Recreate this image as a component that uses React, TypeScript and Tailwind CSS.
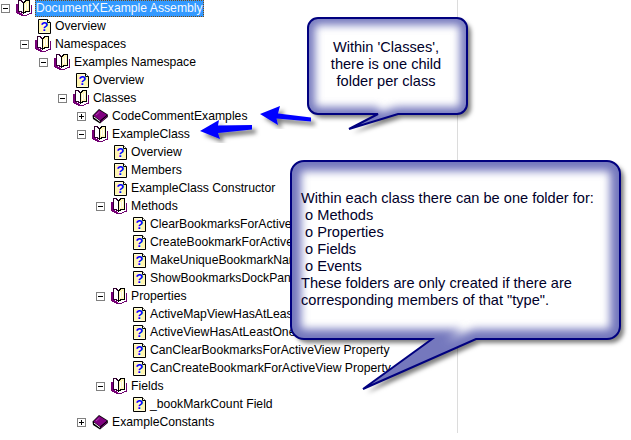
type TreeNode = {
  label: string;
  kind: 'folder' | 'closed' | 'page';
  selected?: boolean;
  children?: TreeNode[];
};

const page = (label: string): TreeNode => ({ label, kind: 'page' });

const tree: TreeNode = {
  label: 'DocumentXExample Assembly',
  kind: 'folder',
  selected: true,
  children: [
    page('Overview'),
    {
      label: 'Namespaces',
      kind: 'folder',
      children: [
        {
          label: 'Examples Namespace',
          kind: 'folder',
          children: [
            page('Overview'),
            {
              label: 'Classes',
              kind: 'folder',
              children: [
                { label: 'CodeCommentExamples', kind: 'closed' },
                {
                  label: 'ExampleClass',
                  kind: 'folder',
                  children: [
                    page('Overview'),
                    page('Members'),
                    page('ExampleClass Constructor'),
                    {
                      label: 'Methods',
                      kind: 'folder',
                      children: [
                        page('ClearBookmarksForActiveView Method'),
                        page('CreateBookmarkForActiveView Method'),
                        page('MakeUniqueBookmarkName Method'),
                        page('ShowBookmarksDockPanel Method'),
                      ],
                    },
                    {
                      label: 'Properties',
                      kind: 'folder',
                      children: [
                        page('ActiveMapViewHasAtLeastOne Property'),
                        page('ActiveViewHasAtLeastOne Property'),
                        page('CanClearBookmarksForActiveView Property'),
                        page('CanCreateBookmarkForActiveView Property'),
                      ],
                    },
                    {
                      label: 'Fields',
                      kind: 'folder',
                      children: [page('_bookMarkCount Field')],
                    },
                  ],
                },
                { label: 'ExampleConstants', kind: 'closed' },
              ],
            },
          ],
        },
      ],
    },
  ],
};

function Expander({ open }: { open: boolean }) {
  return (
    <svg width="9" height="9" viewBox="0 0 9 9" className="shrink-0" shapeRendering="crispEdges">
      <rect x="0.5" y="0.5" width="8" height="8" fill="#fff" stroke="#808080" />
      <path d="M2 4.5H7" stroke="#000" />
      {!open && <path d="M4.5 2V7" stroke="#000" />}
    </svg>
  );
}

function OpenBook() {
  return (
    <svg width="16" height="16" viewBox="0 0 16 16" className="shrink-0" shapeRendering="crispEdges">
      <path d="M0.5 3.5V12.5L6.5 15.5H9.5L15.5 13V4.5" fill="#fff" stroke="#700070" />
      <path d="M1.5 4V12L7 14.5" fill="none" stroke="#800080" />
      <path d="M2.5 0.5H5L7.5 3V13.5L5 11.5H2.5Z" fill="#fff" stroke="#300030" />
      <path d="M7.5 3L10 0.5H13.5V11.5H10L7.5 13.5Z" fill="#fff6b8" stroke="#000" />
      <path d="M9.5 4V10M11.5 3V9" stroke="#ffffff" />
    </svg>
  );
}

function ClosedBook() {
  return (
    <svg width="16" height="16" viewBox="0 0 16 16" className="shrink-0">
      <path d="M0.5 7.5L7 1L15.8 6.5V9L8 15.5L1 11Z" fill="#000" />
      <path d="M1.5 7.5L7 2L15 6.8L8 12.5Z" fill="#800080" />
      <path d="M2 9L8 13.5" fill="none" stroke="#fff" />
      <path d="M8.5 14L15 8.5" fill="none" stroke="#800080" />
      <path d="M4 7L7.5 4" stroke="#b040b0" />
    </svg>
  );
}

function HelpPage() {
  return (
    <svg width="13" height="15" viewBox="0 0 13 15" className="shrink-0">
      <path d="M0.5 0.5H9.5L12.5 3.5V14.5H0.5Z" fill="#fffcd8" stroke="#000" />
      <path d="M2 2V13M4 2V13M9 4V13M11 4V13" stroke="#fff08a" />
      <path d="M9.5 0.5V3.5H12.5" fill="#fff" stroke="#000" />
      <text x="6.5" y="12" textAnchor="middle" fontFamily="Liberation Sans" fontWeight="700" fontSize="13" fill="#0000ff">
        ?
      </text>
    </svg>
  );
}

function TreeItem({ node }: { node: TreeNode }) {
  const isPage = node.kind === 'page';
  return (
    <li>
      <div className={isPage ? 'flex items-center h-[18px] pl-[18px] gap-[3px]' : 'flex items-center h-[18px]'}>
        {!isPage && <Expander open={node.kind === 'folder'} />}
        {!isPage && <span className="w-[6px] shrink-0" />}
        {node.kind === 'folder' && <OpenBook />}
        {node.kind === 'closed' && <ClosedBook />}
        {isPage && <HelpPage />}
        <span
          className={
            node.selected
              ? 'ml-[3px] px-[1px] h-[17px] leading-[16px] mt-[1px] bg-[#3399ff] text-[#f4f8ff] outline-1 outline-dotted outline-[#7a4a10] -outline-offset-1 whitespace-nowrap'
              : isPage
                ? 'px-[1px] leading-[16px] -mt-[1px] whitespace-nowrap'
                : 'ml-[3px] px-[1px] leading-[16px] -mt-[1px] whitespace-nowrap'
          }
        >
          {node.label}
        </span>
      </div>
      {node.children && (
        <ul className="pl-[19px]">
          {node.children.map((child, i) => (
            <TreeItem key={i} node={child} />
          ))}
        </ul>
      )}
    </li>
  );
}

const bigBubble =
  'M304 161H607A13 13 0 0 1 620 174V326A13 13 0 0 1 607 339H476L363 389L432 339H304A13 13 0 0 1 291 326V174A13 13 0 0 1 304 161Z';
const smallBubble =
  'M318 18H457A10 10 0 0 1 467 28V104A10 10 0 0 1 457 114H398L349 129L378 114H318A10 10 0 0 1 308 104V28A10 10 0 0 1 318 18Z';

function Bubble({ d, id, glow }: { d: string; id: string; glow: number }) {
  return (
    <>
      <path d={d} fill="#00007f" filter="url(#shadow)" />
      <clipPath id={id}>
        <path d={d} />
      </clipPath>
      <g clipPath={`url(#${id})`}>
        <path d={d} fill="#fff" />
        <path d={d} fill="none" stroke="#7478bd" strokeWidth={glow} filter="url(#glow)" />
      </g>
      <path d={d} fill="none" stroke="#00007f" strokeWidth="2" />
    </>
  );
}

function Overlay() {
  return (
    <svg width="631" height="440" viewBox="0 0 631 440" className="absolute left-0 top-0">
      <defs>
        <filter id="shadow" x="-20%" y="-20%" width="140%" height="140%">
          <feDropShadow dx="4" dy="4" stdDeviation="2" floodColor="#000" floodOpacity="0.5" />
        </filter>
        <filter id="glow" x="-20%" y="-20%" width="140%" height="140%">
          <feGaussianBlur stdDeviation="4" />
        </filter>
      </defs>
      <path
        d="M260 114L280 106L278 113.5L311 117.5L311 121.5L276.5 118.5L278 125Z"
        fill="#0000ff"
        filter="url(#shadow)"
      />
      <path
        d="M200 131L219 120L218 125.5L252 125L252 129.5L218 133L220 139Z"
        fill="#0000ff"
        filter="url(#shadow)"
      />
      <Bubble d={smallBubble} id="clip-small" glow={14} />
      <Bubble d={bigBubble} id="clip-big" glow={20} />
    </svg>
  );
}

export default function App() {
  return (
    <div className="relative w-[631px] h-[440px] overflow-hidden bg-white text-black font-['Liberation_Sans',Arial,sans-serif]">
      <div className="w-[458px] h-[433px] overflow-hidden border-r border-[#dcdcdc] pl-[1px] text-[12.2px]">
        <ul className="-mt-[1px]">
          <TreeItem node={tree} />
        </ul>
      </div>
      <Overlay />
      <div className="absolute left-[307px] top-[39px] w-[158px] text-center text-[14.6px] leading-[17px] text-[#00002a]">
        Within 'Classes',
        <br />
        there is one child
        <br />
        folder per class
      </div>
      <div className="absolute left-[301px] top-[190px] text-[14.6px] leading-[17px] whitespace-pre text-[#00002a]">
        {`Within each class there can be one folder for:
 o Methods
 o Properties
 o Fields
 o Events
These folders are only created if there are
corresponding members of that "type".`}
      </div>
    </div>
  );
}
